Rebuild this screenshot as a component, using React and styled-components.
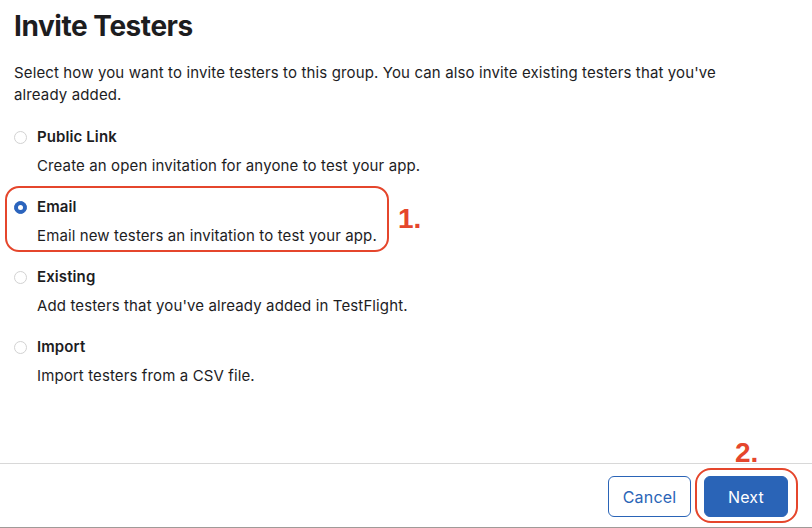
import React from 'react';
import styled, { createGlobalStyle } from 'styled-components';

const Global = createGlobalStyle`
  html, body { margin: 0; padding: 0; background: #fff; }
  body { font-family: Inter, "Noto Sans", "Liberation Sans", sans-serif; color: #1d1d1f; }
`;

const Page = styled.div`
  width: 812px;
  height: 528px;
  display: flex;
  flex-direction: column;
  overflow: hidden;
`;

const Content = styled.div`
  flex: 1;
  padding: 9px 14px 0;
`;

const Title = styled.h1`
  margin: 0;
  font-size: 28px;
  line-height: 34px;
  font-weight: 700;
  letter-spacing: -0.45px;
  color: #1d1d1f;
`;

const Intro = styled.p`
  margin: 19px 0 20px;
  font-size: 15px;
  line-height: 22px;
  letter-spacing: 0.13px;
  color: #1d1d1f;
  max-width: 740px;
`;

const Options = styled.div`
  display: flex;
  flex-direction: column;
  gap: 19px;
`;

const Option = styled.div`
  position: relative;
  display: grid;
  grid-template-columns: 13px 1fr;
  column-gap: 10px;
  row-gap: 7px;
  align-items: center;
`;

const Radio = styled.span`
  width: 13px;
  height: 13px;
  box-sizing: border-box;
  border-radius: 50%;
  border: 1px solid ${({ checked }) => (checked ? '#2b64bd' : '#d2d2d2')};
  background: ${({ checked }) => (checked ? '#2b64bd' : '#fff')};
  display: flex;
  align-items: center;
  justify-content: center;
  &::after {
    content: '';
    width: 5px;
    height: 5px;
    border-radius: 50%;
    background: #fff;
    display: ${({ checked }) => (checked ? 'block' : 'none')};
  }
`;

const Label = styled.span`
  font-size: 15px;
  line-height: 22px;
  font-weight: 600;
  letter-spacing: 0.1px;
  color: #1d1d1f;
`;

const Desc = styled.span`
  grid-column: 2;
  font-size: 15px;
  line-height: 22px;
  letter-spacing: 0.12px;
  color: #1d1d1f;
`;

const Ring = styled.span`
  position: absolute;
  box-sizing: border-box;
  border: 2px solid #e5462c;
  border-radius: ${({ r }) => r}px;
  pointer-events: none;
`;

const Mark = styled.span`
  position: absolute;
  font-family: "Liberation Sans", Arial, sans-serif;
  font-weight: 700;
  font-size: 28px;
  line-height: 28px;
  color: #e5462c;
`;

const Footer = styled.div`
  border-top: 1px solid #d8d8d8;
  border-bottom: 1px solid #a09a98;
  padding: 12px 24px 10px;
  display: flex;
  justify-content: flex-end;
  gap: 13px;
`;

const Button = styled.button`
  box-sizing: border-box;
  height: 41px;
  min-width: ${({ w }) => w}px;
  border-radius: 6px;
  font-family: inherit;
  font-size: 16px;
  font-weight: 400;
  letter-spacing: 0.2px;
  cursor: pointer;
  border: 1px solid #2a64b7;
  background: ${({ primary }) => (primary ? '#2a64b7' : '#fff')};
  color: ${({ primary }) => (primary ? '#fff' : '#2a64b7')};
`;

const Annotated = styled.span`
  position: relative;
  display: inline-flex;
`;

const options = [
  { label: 'Public Link', desc: 'Create an open invitation for anyone to test your app.' },
  { label: 'Email', desc: 'Email new testers an invitation to test your app.', checked: true },
  { label: 'Existing', desc: "Add testers that you've already added in TestFlight." },
  { label: 'Import', desc: 'Import testers from a CSV file.' },
];

export default function App() {
  return (
    <Page>
      <Global />
      <Content>
        <Title>Invite Testers</Title>
        <Intro>
          Select how you want to invite testers to this group. You can also invite existing testers that you've
          already added.
        </Intro>
        <Options>
          {options.map((o) => (
            <Option key={o.label}>
              <Radio checked={o.checked} />
              <Label>{o.label}</Label>
              <Desc>{o.desc}</Desc>
              {o.checked && (
                <>
                  <Ring r={14} style={{ left: -9, top: -10, width: 384, height: 66 }} />
                  <Mark style={{ left: 384, top: 9 }}>1.</Mark>
                </>
              )}
            </Option>
          ))}
        </Options>
      </Content>
      <Footer>
        <Button w={83}>Cancel</Button>
        <Annotated>
          <Button primary w={84}>Next</Button>
          <Ring r={16} style={{ left: -9, top: -8, width: 103, height: 55 }} />
          <Mark style={{ left: 31, top: -37 }}>2.</Mark>
        </Annotated>
      </Footer>
    </Page>
  );
}
